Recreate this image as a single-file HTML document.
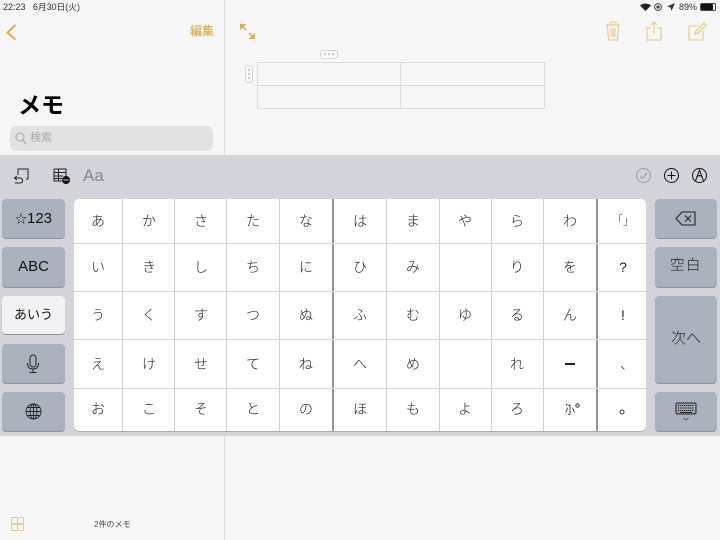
<!DOCTYPE html>
<html lang="ja"><head><meta charset="utf-8"><style>
html,body{margin:0;padding:0}
#p{position:relative;width:720px;height:540px;overflow:hidden;background:#f6f6f6;font-family:"Liberation Sans","Noto Sans CJK JP",sans-serif;color:#111}
#p div,#p svg{position:absolute}
.t{white-space:nowrap}
.k{width:52px;height:48px;text-align:center;font-size:14px;line-height:46px;color:#222;font-weight:300}
.s{background:#acb2bd;border-radius:4px;box-shadow:0 1px 0 #8d919b;text-align:center;color:#111}
.vl{top:199px;height:232px;width:1px;background:#d0d1d4}
.hl{left:74px;width:572px;height:1px;background:#d7d8da}
</style></head><body><div id="p">
<div style="left:224px;top:0;width:1px;height:540px;background:#dcdcdc"></div>
<div class="t" style="left:3px;top:2px;font-size:9px;line-height:11px;color:#333">22:23</div>
<div class="t" style="left:33px;top:2px;font-size:8.8px;line-height:11px;color:#333">6月30日(火)</div>
<svg style="left:5px;top:23px" width="12" height="18" viewBox="0 0 12 18"><path d="M10.500 2 L2.500 9.500 L10.500 16.500" fill="none" stroke="#dcae4f" stroke-width="2"/></svg>
<div class="t" style="left:190px;top:24px;font-size:12px;line-height:15px;font-weight:bold;color:#d9b765">編集</div>
<div class="t" style="left:18px;top:90px;font-size:23px;line-height:30px;font-weight:bold;color:#000">メモ</div>
<div style="left:10px;top:126px;width:203px;height:25px;border-radius:6px;background:#e2e2e2"></div>
<svg style="left:14px;top:131px" width="13" height="14" viewBox="0 0 13 14"><circle cx="6" cy="6" r="4" fill="none" stroke="#a5a5a5" stroke-width="1"/><path d="M9 9 L12 13" stroke="#a5a5a5" stroke-width="1.200"/></svg>
<div class="t" style="left:30px;top:131px;font-size:11px;line-height:14px;color:#a8a8a8">検索</div>
<svg style="left:239px;top:23px" width="17" height="17" viewBox="0 0 17 17"><g fill="none" stroke="#d9ae52" stroke-width="1.500"><path d="M2 2 L7 7 M10 10 L15 15"/></g><path d="M1 1 H7 L1 7Z M16 16 H10 L16 10Z" fill="#d9ae52"/></svg>
<div style="left:320px;top:50px;width:16px;height:7px;border:1px solid #d4d4d4;border-radius:3px;background:#fafafa"></div>
<svg style="left:323px;top:52px" width="12" height="4"><circle cx="2" cy="2" r=".8" fill="#888"/><circle cx="6" cy="2" r=".8" fill="#888"/><circle cx="10" cy="2" r=".8" fill="#888"/></svg>
<div style="left:245px;top:65px;width:6px;height:16px;border:1px solid #d4d4d4;border-radius:3px;background:#fafafa"></div>
<svg style="left:247px;top:68px" width="4" height="12"><circle cx="2" cy="2" r=".8" fill="#888"/><circle cx="2" cy="6" r=".8" fill="#888"/><circle cx="2" cy="10" r=".8" fill="#888"/></svg>
<div style="left:257px;top:62px;width:286px;height:45px;border:1px solid #dcdcdc"></div>
<div style="left:400px;top:62px;width:1px;height:46px;background:#dcdcdc"></div>
<div style="left:257px;top:85px;width:287px;height:1px;background:#dcdcdc"></div>
<svg style="left:640px;top:3px" width="11" height="8" viewBox="0 0 11 8"><path d="M5.500 8 L0 2.500 Q5.500 -1.500 11 2.500Z" fill="#222"/></svg>
<svg style="left:654px;top:3px" width="8" height="8"><circle cx="4" cy="4" r="3.400" fill="none" stroke="#444"/><circle cx="4" cy="4" r="1.600" fill="#444"/></svg>
<svg style="left:667px;top:3px" width="8" height="8"><path d="M8 0 L0 3.500 L3.500 4.500 L4.500 8Z" fill="#333"/></svg>
<div class="t" style="left:679px;top:2px;font-size:9px;line-height:11px;color:#333">89%</div>
<div style="left:700px;top:3px;width:14px;height:6px;border:1px solid #444;border-radius:2px"></div>
<div style="left:701px;top:4px;width:12px;height:6px;background:#111;border-radius:1px"></div>
<svg style="left:605px;top:21px" width="16" height="20" viewBox="0 0 16 20" fill="none" stroke="#e0c685" stroke-width="1"><path d="M1 4 H15 M5 4 V2 Q5 1 6 1 H10 Q11 1 11 2 V4 M2.500 4 L3.500 19 H12.500 L13.500 4 M6 7 L6.300 16 M8 7 V16 M10 7 L9.700 16"/></svg>
<svg style="left:646px;top:21px" width="16" height="20" viewBox="0 0 16 20" fill="none" stroke="#e0c685" stroke-width="1"><path d="M5 7 H1 V19 H15 V7 H11 M8 13 V1 M5 4 L8 1 L11 4"/></svg>
<svg style="left:688px;top:22px" width="19" height="19" viewBox="0 0 19 19" fill="none" stroke="#e0c685" stroke-width="1"><path d="M10 4 H1 V18 H15 V9"/><path d="M7 12 L8 9 L16 1 L18 3 L10 11Z" stroke-width="1.200"/></svg>
<svg style="left:10px;top:516px" width="16" height="16" viewBox="0 0 16 16" fill="none" stroke="#e3cc8e" stroke-width="1"><rect x="1.500" y="1.500" width="6" height="6" rx="1"/><rect x="7.500" y="1.500" width="6" height="6" rx="1"/><rect x="1.500" y="8.500" width="6" height="6" rx="1"/><rect x="7.500" y="8.500" width="6" height="6" rx="1"/></svg>
<div class="t" style="left:94px;top:519px;font-size:8px;line-height:11px;color:#444">2件のメモ</div>

<div style="left:0;top:155px;width:720px;height:281px;background:#d2d4d9"></div>
<svg style="left:13px;top:167px" width="17" height="17" viewBox="0 0 17 17" fill="none" stroke="#222" stroke-width="1"><path d="M5 8 V2 H15 V12 H13 M1 11 H7 Q9.500 11 9.500 13.500 Q9.500 16 7 16 H2 M4 9 L1.500 11 L4 13"/></svg>
<svg style="left:53px;top:168px" width="17" height="16" viewBox="0 0 17 16" fill="none" stroke="#222" stroke-width="1"><path d="M1 1 H13 V8 M1 1 V13 H9 M5.500 1 V13 M1 4.500 H13 M1 8 H10 M1 10.500 H9"/><circle cx="13" cy="12" r="3.600" fill="#111"/><path d="M10.500 12 H15.500" stroke="#ddd"/></svg>
<div class="t" style="left:83px;top:166px;font-size:17px;line-height:20px;color:#85878c">Aa</div>
<svg style="left:635px;top:167px" width="17" height="17" fill="none" stroke="#9a9b9f"><circle cx="8.500" cy="8.500" r="7"/><path d="M5 9 L7.500 11.500 L12 6"/></svg>
<svg style="left:663px;top:167px" width="17" height="17" fill="none" stroke="#111"><circle cx="8.500" cy="8.500" r="7"/><path d="M4.500 8.500 H12.500 M8.500 4.500 V12.500"/></svg>
<svg style="left:691px;top:167px" width="17" height="17" fill="none" stroke="#111"><circle cx="8.500" cy="8.500" r="7"/><path d="M4.500 14 L8.500 3 L12.500 14 M6 10 Q8.500 7 11 10"/></svg>

<div class="s" style="left:2px;top:199px;width:63px;height:39px;font-size:15px;line-height:39px"><span style="font-family:'Noto Sans CJK JP',sans-serif;font-size:12px">☆</span>123</div>
<div class="s" style="left:2px;top:247px;width:63px;height:40px;font-size:15px;line-height:40px">ABC</div>
<div class="s" style="left:2px;top:296px;width:63px;height:38px;font-size:13px;line-height:37px;background:#f2f2f4">あいう</div>
<div class="s" style="left:2px;top:344px;width:63px;height:39px"></div>
<svg style="left:26px;top:354px" width="14" height="20" viewBox="0 0 14 20" fill="none" stroke="#222"><rect x="4" y="1" width="6" height="12" rx="3"/><path d="M1.500 9 Q1.500 15 7 15 Q12.500 15 12.500 9 M7 15 V18 M3.500 18.500 H10.500"/></svg>
<div class="s" style="left:2px;top:392px;width:63px;height:39px"></div>
<svg style="left:25px;top:403px" width="17" height="17" fill="none" stroke="#222" stroke-width=".9"><circle cx="8.500" cy="8.500" r="7.500"/><ellipse cx="8.500" cy="8.500" rx="3.500" ry="7.500"/><path d="M8.500 1 V16 M1 8.500 H16 M2.500 4.500 H14.500 M2.500 12.500 H14.500"/></svg>

<div class="s" style="left:655px;top:199px;width:62px;height:39px"></div>
<svg style="left:675px;top:211px" width="21" height="15" viewBox="0 0 21 15" fill="none" stroke="#222" stroke-width="1.100"><path d="M1 7.500 L7 1 H20 V14 H7Z M10 4.500 L16 10.500 M16 4.500 L10 10.500"/></svg>
<div class="s" style="left:655px;top:247px;width:62px;height:40px;font-size:14.500px;line-height:39px;letter-spacing:1.500px;color:#222;font-weight:300">空白</div>
<div class="s" style="left:655px;top:296px;width:62px;height:87px;font-size:15px;line-height:86px;color:#222;font-weight:300">次へ</div>
<div class="s" style="left:655px;top:392px;width:62px;height:39px"></div>
<svg style="left:675px;top:402px" width="22" height="20" viewBox="0 0 22 20" fill="none" stroke="#222"><rect x="1" y="1" width="20" height="11" rx="1.500" fill="#9da2ad"/><path d="M3 3.500 H19 M3 6 H19 M3 8.500 H19" stroke-dasharray="1.200 .8"/><path d="M5 10.500 H17"/><path d="M8.500 16 L11 18 L13.500 16" stroke="#555"/></svg>

<div style="left:74px;top:199px;width:572px;height:232px;background:#fff;border-radius:5px;box-shadow:0 1px 0 #a9acb3"></div>
<div class="vl" style="left:122px"></div><div class="vl" style="left:174px"></div><div class="vl" style="left:226px"></div><div class="vl" style="left:279px"></div>
<div class="vl" style="left:386px"></div><div class="vl" style="left:439px"></div><div class="vl" style="left:491px"></div><div class="vl" style="left:543px"></div>
<div class="vl" style="left:332px;width:2px;background:#8f939d"></div><div class="vl" style="left:596px;width:2px;background:#8f939d"></div>
<div class="hl" style="top:243px"></div><div class="hl" style="top:291px"></div><div class="hl" style="top:339px"></div><div class="hl" style="top:388px"></div>

<div class="k" style="left:72px;top:198px">あ</div><div class="k" style="left:123px;top:198px">か</div><div class="k" style="left:175px;top:198px">さ</div><div class="k" style="left:227px;top:198px">た</div><div class="k" style="left:280px;top:198px">な</div><div class="k" style="left:334px;top:198px">は</div><div class="k" style="left:387px;top:198px">ま</div><div class="k" style="left:439px;top:198px">や</div><div class="k" style="left:491px;top:198px">ら</div><div class="k" style="left:544px;top:198px">わ</div><div class="k" style="left:597px;top:198px;font-size:11px;color:#333">「」</div>
<div class="k" style="left:72px;top:244px">い</div><div class="k" style="left:123px;top:244px">き</div><div class="k" style="left:175px;top:244px">し</div><div class="k" style="left:227px;top:244px">ち</div><div class="k" style="left:280px;top:244px">に</div><div class="k" style="left:334px;top:244px">ひ</div><div class="k" style="left:387px;top:244px">み</div><div class="k" style="left:491px;top:244px">り</div><div class="k" style="left:544px;top:244px">を</div><div class="k" style="left:597px;top:244px">?</div>
<div class="k" style="left:72px;top:292px">う</div><div class="k" style="left:123px;top:292px">く</div><div class="k" style="left:175px;top:292px">す</div><div class="k" style="left:227px;top:292px">つ</div><div class="k" style="left:280px;top:292px">ぬ</div><div class="k" style="left:334px;top:292px">ふ</div><div class="k" style="left:387px;top:292px">む</div><div class="k" style="left:439px;top:292px">ゆ</div><div class="k" style="left:491px;top:292px">る</div><div class="k" style="left:544px;top:292px">ん</div><div class="k" style="left:597px;top:292px">!</div>
<div class="k" style="left:72px;top:341px">え</div><div class="k" style="left:123px;top:341px">け</div><div class="k" style="left:175px;top:341px">せ</div><div class="k" style="left:227px;top:341px">て</div><div class="k" style="left:280px;top:341px">ね</div><div class="k" style="left:334px;top:341px">へ</div><div class="k" style="left:387px;top:341px">め</div><div class="k" style="left:491px;top:341px">れ</div>
<div style="left:565px;top:363px;width:10px;height:2px;background:#222"></div>
<div class="k" style="left:601px;top:341px">、</div>
<div class="k" style="left:72px;top:386px">お</div><div class="k" style="left:123px;top:386px">こ</div><div class="k" style="left:175px;top:386px">そ</div><div class="k" style="left:227px;top:386px">と</div><div class="k" style="left:280px;top:386px">の</div><div class="k" style="left:334px;top:386px">ほ</div><div class="k" style="left:387px;top:386px">も</div><div class="k" style="left:439px;top:386px">よ</div><div class="k" style="left:491px;top:386px">ろ</div>
<div class="t" style="left:565px;top:406px;font-size:10px;line-height:12px;color:#222">小</div>
<svg style="left:563px;top:402px" width="18" height="7"><path d="M3 3.500 L4.500 2 M5.500 4 L7 2.500" stroke="#333"/><circle cx="14.500" cy="3.500" r="1.700" fill="none" stroke="#333"/></svg>
<svg style="left:618px;top:408px" width="8" height="8"><circle cx="4" cy="4" r="2" fill="none" stroke="#333"/></svg>
</div></body></html>
